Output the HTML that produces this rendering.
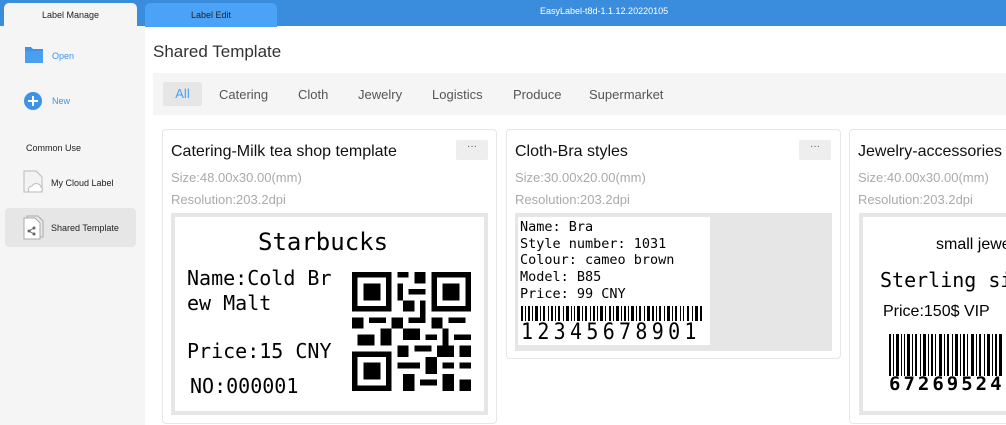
<!DOCTYPE html>
<html><head><meta charset="utf-8"><style>
*{margin:0;padding:0;box-sizing:border-box}
html,body{width:1006px;height:425px;overflow:hidden}
body{background:#fff;font-family:"Liberation Sans","DejaVu Sans",sans-serif}
#w{position:relative;width:1006px;height:425px;overflow:hidden}
.a{position:absolute;white-space:nowrap}
.top{left:0;top:0;width:1006px;height:26px;background:#3a8cdc}
.tab{top:3px;height:24px;border-radius:5px 5px 0 0;font-size:9px;text-align:center;line-height:24px;color:#222}
.side{left:0;top:26px;width:145px;height:399px;background:#f5f5f5}
.mono{font-family:"DejaVu Sans Mono","Liberation Mono",monospace;color:#000}
.card{background:#fff;border:1px solid #e6e6e6;border-radius:4px}
.ct{font-size:16px;color:#111}
.cs{font-size:13px;color:#aaa}
.dots{width:32px;height:20px;background:#eee;border-radius:2px;font-size:10px;color:#555;text-align:center;line-height:14px}
.f{font-size:13px;color:#555;top:87px}
</style></head><body><div id="w">
<div class="a top"></div>
<div class="a tab" style="left:4px;width:133px;background:#f5f5f5">Label Manage</div>
<div class="a tab" style="left:145px;width:132px;background:#4aa3f7">Label Edit</div>
<div class="a" style="left:540px;top:6px;font-size:9px;color:#fff">EasyLabel-t8d-1.1.12.20220105</div>
<div class="a side"></div>
<svg class="a" style="left:24px;top:45px" width="20" height="20"><path d="M1 2h6l2 2h10v14H1z" fill="#3e93e6"/><rect x="1" y="6" width="18" height="12" fill="#4aa0ee"/></svg>
<div class="a" style="left:52px;top:51px;font-size:9px;color:#3e93e6">Open</div>
<svg class="a" style="left:24px;top:91px" width="20" height="20"><circle cx="9" cy="10" r="9" fill="#3e93e6"/><path d="M9 5v10M4 10h10" stroke="#fff" stroke-width="2"/></svg>
<div class="a" style="left:52px;top:96px;font-size:9px;color:#3e93e6">New</div>
<div class="a" style="left:26px;top:143px;font-size:9px;color:#222">Common Use</div>
<svg class="a" style="left:23px;top:170px" width="22" height="24"><path d="M1 1h12l6 6v15H1z" fill="#f3f3f3" stroke="#bbb"/><path d="M6 22a4 4 0 0 1 3-6a5 5 0 0 1 9 1a3 3 0 0 1 0 5z" fill="#fff" stroke="#bbb"/></svg>
<div class="a" style="left:51px;top:178px;font-size:9px;color:#222">My Cloud Label</div>
<div class="a" style="left:5px;top:208px;width:131px;height:39px;background:#e6e6e6;border-radius:4px"></div>
<svg class="a" style="left:23px;top:215px" width="22" height="26"><path d="M4 1h11l5 5v16H4z" fill="#e8e8e8" stroke="#aaa"/><path d="M1 3h11l5 5v16H1z" fill="#fff" stroke="#aaa"/><circle cx="11" cy="13" r="1.5" fill="#666"/><circle cx="6" cy="16" r="1.5" fill="#666"/><circle cx="11" cy="19" r="1.5" fill="#666"/><path d="M11 13 6 16 11 19" stroke="#666" fill="none"/></svg>
<div class="a" style="left:51px;top:223px;font-size:9px;color:#222">Shared Template</div>

<div class="a" style="left:153px;top:42px;font-size:17px;color:#333">Shared Template</div>
<div class="a" style="left:153px;top:73px;width:853px;height:42px;background:#f5f5f5"></div>
<div class="a" style="left:163px;top:82px;width:39px;height:24px;background:#e6e6e6;border-radius:2px;color:#4a9ff0;font-size:13px;text-align:center;line-height:24px">All</div>
<div class="a f" style="left:219px">Catering</div>
<div class="a f" style="left:298px">Cloth</div>
<div class="a f" style="left:358px">Jewelry</div>
<div class="a f" style="left:432px">Logistics</div>
<div class="a f" style="left:513px">Produce</div>
<div class="a f" style="left:589px">Supermarket</div>

<div class="a card" style="left:162px;top:129px;width:335px;height:295px"></div>
<div class="a ct" style="left:171px;top:143px">Catering-Milk tea shop template</div>
<div class="a dots" style="left:456px;top:140px">···</div>
<div class="a cs" style="left:171px;top:170px">Size:48.00x30.00(mm)</div>
<div class="a cs" style="left:171px;top:192px">Resolution:203.2dpi</div>
<div class="a" style="left:171px;top:213px;width:317px;height:202px;border:4px solid #e6e6e6;background:#fff"></div>
<div class="a mono" style="left:258px;top:228px;font-size:24px">Starbucks</div>
<div class="a mono" style="left:187px;top:266px;font-size:20px;line-height:25px">Name:Cold Br<br>ew Malt</div>
<div class="a mono" style="left:187px;top:339px;font-size:20px">Price:15 CNY</div>
<div class="a mono" style="left:190px;top:374px;font-size:20px">NO:000001</div>
<svg class="a" style="left:352px;top:272px" width="119" height="119" viewBox="0 0 21 21" shape-rendering="crispEdges">
<g fill="#000"><path d="M0 0h7v7H0zM14 0h7v7h-7zM0 14h7v7H0z"/></g>
<g fill="#fff"><path d="M1 1h5v5H1zM15 1h5v5h-5zM1 15h5v5H1z"/></g>
<g fill="#000"><path d="M2 2h3v3H2zM16 2h3v3h-3zM2 16h3v3H2z"/>
<path d="M8 0h2v1H8zM11 0h2v2h-2zM8 2h1v3H8zM10 3h3v1h-3zM9 5h2v2H9zM12 5h1v3h-1zM0 8h2v2H0zM3 8h3v1H3zM7 8h2v2H7zM10 8h3v1h-3zM14 8h2v2h-2zM17 8h3v1h-3zM1 11h3v2H1zM5 10h2v3H5zM9 10h3v2H9zM13 11h2v1h-2zM16 10h1v3h-1zM18 11h3v1h-3zM8 13h2v2H8zM11 13h3v1h-3zM15 13h3v2h-3zM19 13h2v2h-2zM8 16h4v1H8zM13 15h2v3h-2zM16 16h2v1h-2zM19 16h2v1h-2zM9 18h2v3H9zM12 19h3v1h-3zM16 18h2v3h-2zM19 19h2v2h-2z"/></g>
</svg>

<div class="a card" style="left:506px;top:129px;width:335px;height:230px"></div>
<div class="a ct" style="left:515px;top:143px">Cloth-Bra styles</div>
<div class="a dots" style="left:799px;top:140px">···</div>
<div class="a cs" style="left:515px;top:170px">Size:30.00x20.00(mm)</div>
<div class="a cs" style="left:515px;top:192px">Resolution:203.2dpi</div>
<div class="a" style="left:515px;top:213px;width:317px;height:138px;background:#e6e6e6"></div>
<div class="a" style="left:518px;top:217px;width:192px;height:128px;background:#fff"></div>
<div class="a mono" style="left:520px;top:219px;font-size:13.5px;line-height:16.7px">Name: Bra<br>Style number: 1031<br>Colour: cameo brown<br>Model: B85<br>Price: 99 CNY</div>
<svg class="a" style="left:521px;top:306px" width="182" height="15"><g fill="#000">
<path d="M0 0h2v15H0zM4 0h1v15H4zM7 0h2v15H7zM11 0h1v15h-1zM14 0h3v15h-3zM19 0h1v15h-1zM22 0h2v15h-2zM27 0h1v15h-1zM30 0h2v15h-2zM34 0h1v15h-1zM37 0h2v15h-2zM42 0h1v15h-1zM45 0h3v15h-3zM50 0h1v15h-1zM53 0h1v15h-1zM56 0h3v15h-3zM61 0h1v15h-1zM64 0h2v15h-2zM69 0h1v15h-1zM72 0h2v15h-2zM76 0h1v15h-1zM79 0h3v15h-3zM84 0h1v15h-1zM88 0h2v15h-2zM92 0h1v15h-1zM95 0h3v15h-3zM100 0h1v15h-1zM103 0h2v15h-2zM107 0h1v15h-1zM110 0h3v15h-3zM115 0h1v15h-1zM118 0h2v15h-2zM123 0h1v15h-1zM126 0h3v15h-3zM131 0h2v15h-2zM135 0h1v15h-1zM138 0h2v15h-2zM143 0h1v15h-1zM146 0h3v15h-3zM151 0h1v15h-1zM154 0h2v15h-2zM159 0h1v15h-1zM162 0h1v15h-1zM166 0h2v15h-2zM171 0h1v15h-1zM174 0h3v15h-3zM179 0h2v15h-2z"/></g></svg>
<div class="a mono" style="left:521px;top:318px;font-size:20px;letter-spacing:4.3px;transform:scaleY(1.1);transform-origin:top">12345678901</div>

<div class="a" style="left:849px;top:129px;width:157px;height:296px;overflow:hidden">
<div class="a card" style="left:0;top:0;width:200px;height:295px"></div>
<div class="a ct" style="left:9px;top:14px">Jewelry-accessories</div>
<div class="a cs" style="left:9px;top:41px">Size:40.00x30.00(mm)</div>
<div class="a cs" style="left:9px;top:63px">Resolution:203.2dpi</div>
<div class="a" style="left:10px;top:84px;width:160px;height:202px;border:4px solid #e6e6e6;background:#fff"></div>
<div class="a" style="left:87px;top:107px;font-size:16px;color:#000">small jewelry</div>
<div class="a mono" style="left:31px;top:139px;font-size:20px">Sterling silver</div>
<div class="a" style="left:34px;top:174px;font-size:16px;color:#000">Price:150$ VIP</div>
<svg class="a" style="left:40px;top:205px" width="117" height="42"><g fill="#000"><path d="M0 0h2v42H0zM4 0h1v42H4zM7 0h3v42H7zM12 0h1v42h-1zM15 0h1v42h-1zM18 0h3v42h-3zM23 0h1v42h-1zM26 0h2v42h-2zM31 0h1v42h-1zM34 0h3v42h-3zM39 0h1v42h-1zM42 0h2v42h-2zM46 0h1v42h-1zM50 0h3v42h-3zM55 0h1v42h-1zM58 0h2v42h-2zM63 0h1v42h-1zM66 0h3v42h-3zM71 0h1v42h-1zM74 0h2v42h-2zM78 0h1v42h-1zM82 0h3v42h-3zM87 0h1v42h-1zM90 0h2v42h-2zM95 0h1v42h-1zM98 0h3v42h-3zM103 0h1v42h-1zM106 0h2v42h-2zM110 0h3v42h-3z"/></g></svg>
<div class="a mono" style="left:40px;top:244px;font-size:19px;letter-spacing:3px;font-weight:bold">67269524</div>
</div>
</div></body></html>
